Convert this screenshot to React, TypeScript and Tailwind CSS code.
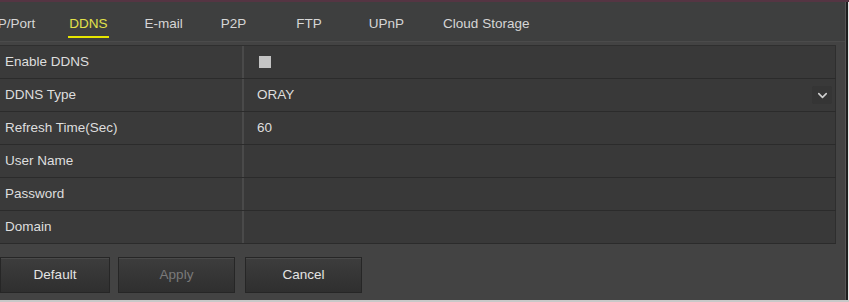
import React from 'react';
import { ChevronDown } from 'lucide-react';

type Row = {
  label: string;
  kind: 'check' | 'select' | 'text';
  value?: string;
};

const rows: Row[] = [
  { label: 'Enable DDNS', kind: 'check' },
  { label: 'DDNS Type', kind: 'select', value: 'ORAY' },
  { label: 'Refresh Time(Sec)', kind: 'text', value: '60' },
  { label: 'User Name', kind: 'text', value: '' },
  { label: 'Password', kind: 'text', value: '' },
  { label: 'Domain', kind: 'text', value: '' },
];

// first tab is scrolled partly off the left edge, like the device UI
const tabs = [
  { name: 'IP/Port', cls: 'ml-[-6px]' },
  { name: 'DDNS', cls: 'ml-[34px]', active: true },
  { name: 'E-mail', cls: 'ml-[37px]' },
  { name: 'P2P', cls: 'ml-[38px]' },
  { name: 'FTP', cls: 'ml-[50px]' },
  { name: 'UPnP', cls: 'ml-[47px]' },
  { name: 'Cloud Storage', cls: 'ml-[39px]' },
];

const App: React.FC = () => {
  return (
    <div
      className="w-[849px] h-[302px] overflow-hidden flex flex-col bg-[#434343] text-[13.5px] text-[#dedede]"
      style={{ fontFamily: '"Liberation Sans", Arial, sans-serif' }}
    >
      <div className="h-[2px] bg-[#553543] shrink-0" />
      <div className="flex flex-1 min-h-0">
        <div className="flex-1 flex flex-col min-w-0">
          {/* tabs */}
          <div className="h-[40px] flex items-start bg-[#3e3f3f] border-b border-[#4b4b4b] shrink-0">
            {tabs.map(t => (
              <div key={t.name} className={`${t.cls} relative pt-[12px] whitespace-nowrap`}>
                <span className={t.active ? 'text-[#e2e24a]' : 'text-[#d6d6d6]'}>{t.name}</span>
                {t.active && (
                  <div className="absolute left-[-1px] right-[-1px] top-[34px] h-[2px] bg-[#e6e600]" />
                )}
              </div>
            ))}
          </div>

          {/* table */}
          <div className="mt-[3px] mr-[9px] border-t border-[#2f2f2f] flex flex-col shrink-0">
            {rows.map(r => (
              <div key={r.label} className="h-[33px] flex border-b border-[#2b2b2b] shadow-[inset_0_1px_0_#474747]">
                <div className="w-[244px] bg-[#3a3a3a] border-r-2 border-[#4a4a4a] flex items-center pl-[5px]">
                  {r.label}
                </div>
                <div className="flex-1 bg-[#393939] border-r border-[#2e2e2e] flex items-center pl-[13px] pr-[3px] relative">
                  {r.kind === 'check' && (
                    <div className="w-[12px] h-[12px] bg-[#c4c4c4] ml-[2px]" />
                  )}
                  {r.kind === 'select' && (
                    <>
                      <span className="flex-1">{r.value}</span>
                      <div className="w-[20px] h-[18px] bg-[#353535] flex items-center justify-center rounded-[2px]">
                        <ChevronDown size={15} strokeWidth={2.5} color="#d0d0d0" />
                      </div>
                    </>
                  )}
                  {r.kind === 'text' && <span>{r.value}</span>}
                </div>
              </div>
            ))}
          </div>

          {/* buttons */}
          <div className="flex mt-[13px] shrink-0">
            <button className="w-[110px] h-[36px] bg-gradient-to-b from-[#3d3d3d] to-[#2f2f2f] border border-[#262626] shadow-[inset_0_1px_0_#4a4a4a] text-[#e4e4e4]">
              Default
            </button>
            <button className="ml-[8px] w-[117px] h-[36px] bg-gradient-to-b from-[#3d3d3d] to-[#2f2f2f] border border-[#262626] shadow-[inset_0_1px_0_#4a4a4a] text-[#7a7a7a]">
              Apply
            </button>
            <button className="ml-[10px] w-[117px] h-[36px] bg-gradient-to-b from-[#3d3d3d] to-[#2f2f2f] border border-[#262626] shadow-[inset_0_1px_0_#4a4a4a] text-[#e4e4e4]">
              Cancel
            </button>
          </div>
        </div>
        <div className="w-[1px] bg-[#555555]" />
        <div className="w-[2px] bg-[#1e1e1e]" />
        <div className="w-[1px] bg-[#e8e8e8]" />
      </div>
      <div className="h-[2px] bg-[#c8c8c8] shrink-0" />
    </div>
  );
};

export default App;
